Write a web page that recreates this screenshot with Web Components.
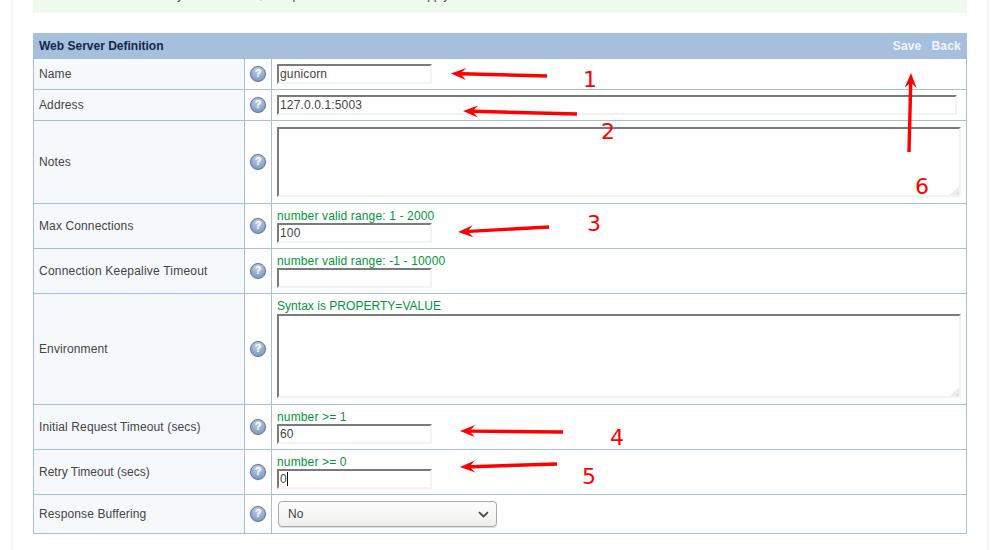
<!DOCTYPE html>
<html lang="en">
<head>
<meta charset="utf-8">
<title>Web Server Definition</title>
<style>
html,body{margin:0;padding:0;background:#fff;overflow:hidden}
body{font:12px/14px "Liberation Sans",Arial,sans-serif;color:#444}
</style>
</head>
<body>
<page-shell>
  <notice-box>recently modified here, then press the Restart tab to apply</notice-box>
  <def-table title-text="Web Server Definition">
    <def-row label="Name"><text-box>gunicorn</text-box></def-row>
    <def-row label="Address"><text-box wide>127.0.0.1:5003</text-box></def-row>
    <def-row label="Notes"><area-box h="70"></area-box></def-row>
    <def-row label="Max Connections"><hint-text>number valid range: 1 - 2000</hint-text><text-box>100</text-box></def-row>
    <def-row label="Connection Keepalive Timeout" style="--ls:.21px"><hint-text>number valid range: -1 - 10000</hint-text><text-box></text-box></def-row>
    <def-row label="Environment"><hint-text style="letter-spacing:.03px">Syntax is PROPERTY=VALUE</hint-text><area-box h="84"></area-box></def-row>
    <def-row label="Initial Request Timeout (secs)"><hint-text>number &gt;= 1</hint-text><text-box>60</text-box></def-row>
    <def-row label="Retry Timeout (secs)" style="--ls:0px"><hint-text>number &gt;= 0</hint-text><text-box caret>0</text-box></def-row>
    <def-row label="Response Buffering"><select-box>No</select-box></def-row>
  </def-table>
  <mark-layer></mark-layer>
</page-shell>
<script>
function define(name, css, html, init){
  customElements.define(name, class extends HTMLElement{
    connectedCallback(){
      if(this.shadowRoot) return;
      const r=this.attachShadow({mode:'open'});
      r.innerHTML='<style>'+css+'</style>'+(typeof html==='function'?html(this):html);
      if(init) init(this,r);
    }
  });
}
define('page-shell',
 ':host{display:block;position:relative;box-sizing:border-box;height:550px;margin:0 1px 0 10px;overflow:hidden;border-left:3px solid #f5f9fc;border-right:3px solid #f5f9fc;padding:0 20px}',
 '<slot></slot>');
define('notice-box',
 ':host{display:block;height:33px;margin:-20px 0 20px;padding:8px 0 0 108px;box-sizing:border-box;background:#eefaed;color:#444;white-space:nowrap;overflow:hidden}',
 '<slot></slot>');
define('def-table',
 ':host{display:block;border:solid #a5c0de;border-width:0 1px 0 1px;font-size:12px}'+
 '.head{display:flex;justify-content:space-between;align-items:center;height:26px;margin:0 -1px;padding:0 6px;background:#a5bfdd;font-weight:bold;color:#14284b}'+
 '.acts{display:flex;gap:10px;color:#f2f6fb;letter-spacing:.2px}',
 t=>'<div class="head"><span>'+t.getAttribute('title-text')+'</span><span class="acts"><span>Save</span><span>Back</span></span></div><slot></slot>');
define('def-row',
 ':host{display:grid;grid-template-columns:211px 27px 1fr;border-bottom:1px solid #a5c0de}'+
 '.l{display:flex;align-items:center;padding-left:5px;background:#f5f9fc;border-right:1px solid #a5c0de;color:#444;letter-spacing:var(--ls,.12px)}'+
 '.h{display:flex;align-items:center;justify-content:center;border-right:1px solid #a5c0de}'+
 '.v{padding:5px;display:flex;flex-direction:column;align-items:flex-start;min-width:0}',
 t=>'<div class="l">'+t.getAttribute('label')+'</div><div class="h"><help-dot></help-dot></div><div class="v"><slot></slot></div>');
define('help-dot',
 ':host{display:block;box-sizing:border-box;width:16px;height:16px;border-radius:50%;border:1.5px solid #5f7597;background:radial-gradient(circle at 50% 25%,#c6d4e7 0,#98afcc 50%,#7590b6 100%);box-shadow:0 0 0 .5px #dfe6ef;color:#fff;font:bold 11px/13px "Liberation Sans",Arial,sans-serif;text-align:center}',
 '?');
const boxBorder='border:2px solid;border-color:#7a7a7a #f3f3f3 #f3f3f3 #7a7a7a;';
define('text-box',
 ':host{display:block;box-sizing:border-box;width:155px;height:20px;'+boxBorder+'padding:0 1px;line-height:16px;color:#444;background:#fff;white-space:nowrap;letter-spacing:.14px}'+
 ':host([wide]){width:680px}'+
 'i{display:inline-block;width:1px;height:14px;background:#111;vertical-align:-3px}',
 t=>'<slot></slot>'+(t.hasAttribute('caret')?'<i></i>':''));
define('area-box',
 ':host{display:block;position:relative;box-sizing:border-box;width:684px;'+boxBorder+'background:#fff;margin:1px 0}'+
 'svg{position:absolute;right:0;bottom:0;display:block}',
 '<svg width="9" height="9" viewBox="0 0 9 9" aria-hidden="true"><path d="M9 0V9H0Z" fill="#ececec"/><path d="M9 5V9H5Z" fill="#dedede"/></svg>',
 t=>{t.style.height=t.getAttribute('h')+'px'});
define('hint-text',
 ':host{display:block;height:14px;line-height:14px;color:#00973a;white-space:nowrap;letter-spacing:.14px}',
 '<slot></slot>');
define('select-box',
 ':host{display:flex;align-items:center;justify-content:space-between;box-sizing:border-box;width:219px;height:26px;margin:1px 0 1px 1px;padding:0 7px 0 9px;border:1px solid #aaa;border-radius:4px;background:linear-gradient(#fdfdfd,#f0efee);color:#444;box-shadow:0 1px 0 #ddd}'+
 'svg{display:block}',
 '<slot></slot><svg width="11" height="7" viewBox="0 0 11 7" aria-hidden="true"><path d="M1 1.2 5.5 5.5 10 1.2" fill="none" stroke="#4a4a4a" stroke-width="1.8"/></svg>');
define('mark-layer',
 ':host{position:absolute;left:-13px;top:0;width:991px;height:550px;pointer-events:none;display:block}'+
 'svg{position:absolute;left:0;top:0}'+
 'span{position:absolute;color:#f00;font:22px/22px "DejaVu Sans",sans-serif}',
 ()=>{
  const arrows=[[547,76,451,73.5],[577,114,463,111],[549,227,458,232],[563,432,460,431],[557,464,460,467],[909,152,911,73]];
  const nums=[[1,583,69],[2,601,121],[3,587,213],[4,610,427],[5,582,466],[6,915,176]];
  let p='';
  for(const [x1,y1,x2,y2] of arrows){
    const a=Math.atan2(y1-y2,x1-x2),c=Math.cos(a),s=Math.sin(a);
    const P=(u,v)=>(x2+u*c-v*s).toFixed(1)+' '+(y2+u*s+v*c).toFixed(1);
    const L=Math.hypot(x1-x2,y1-y2);
    p+='M'+P(0,0)+'L'+P(15,-6)+'L'+P(11,-1.7)+'L'+P(L,-1.7)+'L'+P(L,1.7)+'L'+P(11,1.7)+'L'+P(15,6)+'Z';
  }
  return '<svg width="991" height="550" aria-hidden="true"><path d="'+p+'" fill="#f00"/></svg>'+
    nums.map(n=>'<span style="left:'+n[1]+'px;top:'+n[2]+'px">'+n[0]+'</span>').join('');
 });
</script>
</body>
</html>
